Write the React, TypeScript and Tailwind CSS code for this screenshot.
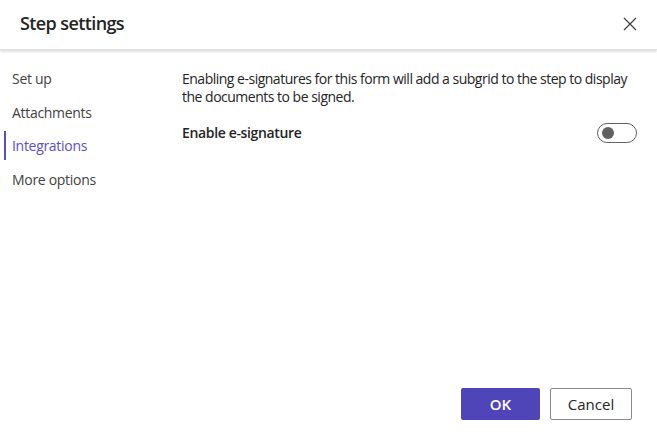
import React from "react";

export default function App() {
  const items = ["Set up", "Attachments", "Integrations", "More options"];
  return (
    <div
      className="w-[657px] h-[435px] bg-white flex flex-col text-[#242424] overflow-hidden"
      style={{ fontFamily: '"Open Sans", "Noto Sans", sans-serif' }}
    >
      <div className="h-[50px] shrink-0 flex items-center justify-between pl-[20px] pr-[20px] shadow-[0_2px_2px_rgba(0,0,0,0.12)] border-b border-[#e0e0e0] relative z-10">
        <div className="text-[18px] font-semibold tracking-[-0.6px] leading-none -mt-[3px]">Step settings</div>
        <svg width="14" height="14" viewBox="0 0 14 14" className="-mt-[2px]">
          <path d="M1 1L13 13M13 1L1 13" stroke="#424242" strokeWidth="1.3" />
        </svg>
      </div>
      <div className="flex flex-1 min-h-0">
        <div className="w-[170px] shrink-0 pt-[14px] pl-[4px]">
          {items.map((t) => {
            const active = t === "Integrations";
            return (
              <div
                key={t}
                className={
                  "h-[29px] mb-[4.5px] flex items-center pl-[6px] border-l-2 text-[14px] tracking-[-0.3px] " +
                  (active ? "border-[#5b4fc7] text-[#5b4fc7]" : "border-transparent text-[#424242]")
                }
              >
                {t}
              </div>
            );
          })}
        </div>
        <div className="flex-1 pt-[20px] pl-[12px] pr-[20px]">
          <p className="text-[14px] leading-[18px] tracking-[-0.5px] text-[#242424]">
            Enabling e-signatures for this form will add a subgrid to the step to display the documents to be signed.
          </p>
          <div className="flex items-center justify-between mt-[16px]">
            <span className="text-[14px] font-semibold tracking-[-0.35px]">Enable e-signature</span>
            <div className="w-[40px] h-[20px] rounded-full border border-[#616161] flex items-center pl-[4px]">
              <div className="w-[12px] h-[12px] rounded-full bg-[#616161]" />
            </div>
          </div>
        </div>
      </div>
      <div className="h-[50px] shrink-0 flex items-start justify-end gap-[10px] pr-[25px] pt-[3px]">
        <button className="w-[79px] h-[32px] rounded-[2px] bg-[#4f45b9] text-white text-[15px] font-semibold">OK</button>
        <button className="w-[82px] h-[32px] rounded-[2px] bg-white border border-[#8a8a8a] text-[#242424] text-[15px]">Cancel</button>
      </div>
    </div>
  );
}
